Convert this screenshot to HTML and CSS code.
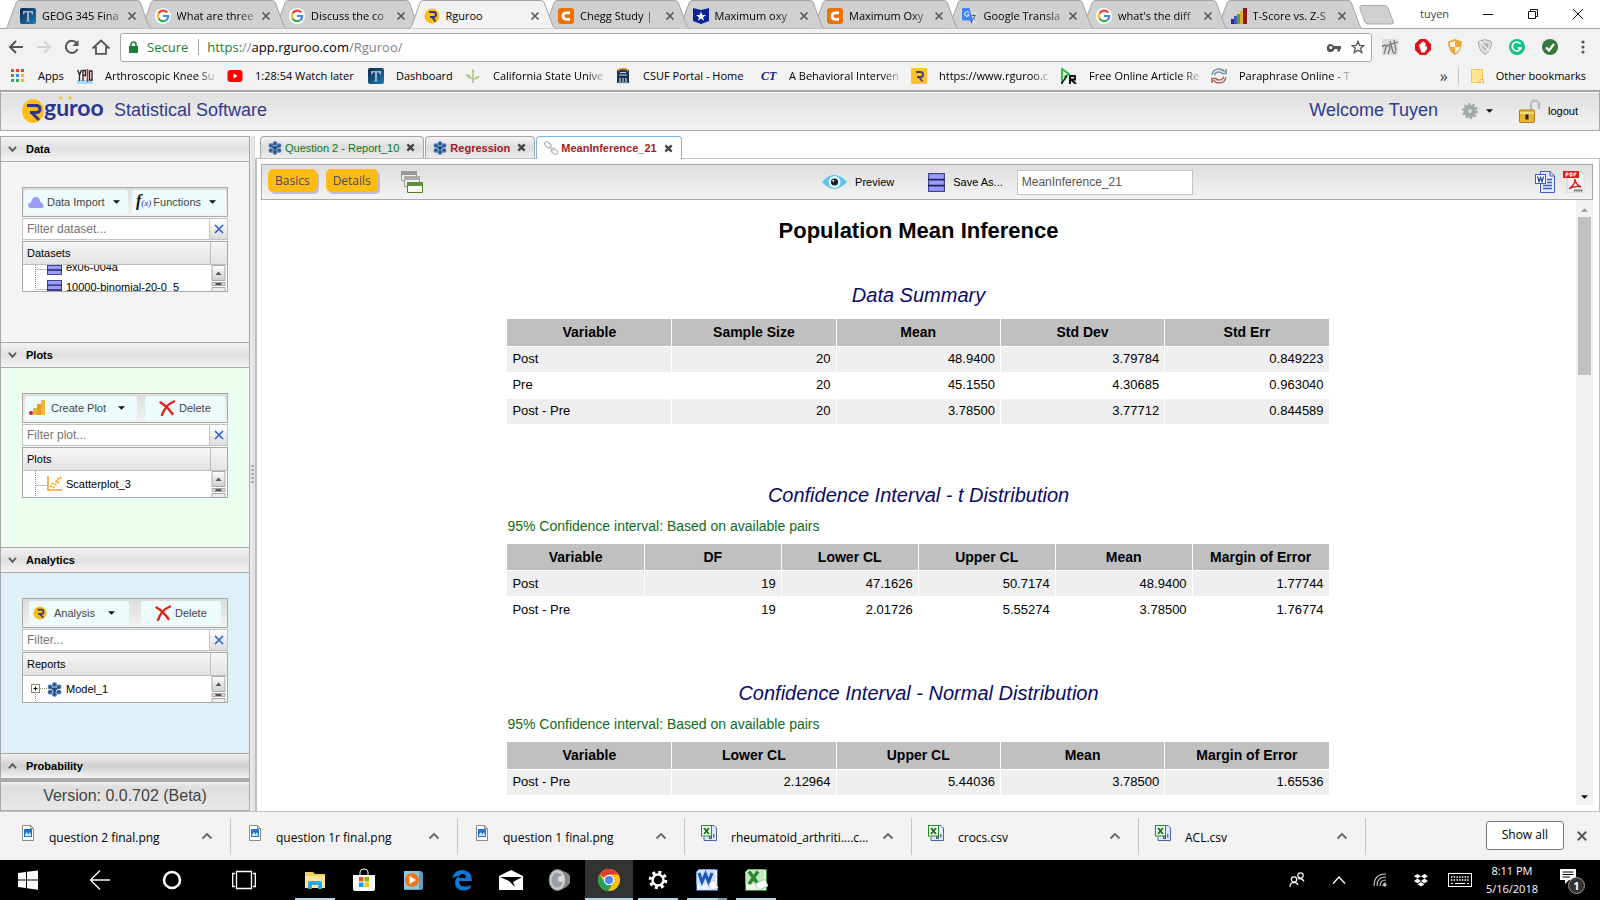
FILE: index.html
```html
<!DOCTYPE html>
<html lang="en">
<head>
<meta charset="utf-8">
<title>Rguroo</title>
<link rel="stylesheet" href="styles.css">
</head>
<body>
<svg class="defs" aria-hidden="true">
  <linearGradient id="gradT" x1="0" y1="0" x2="1" y2="1"><stop offset="0" stop-color="#0b2a4a"/><stop offset="1" stop-color="#1d7bb8"/></linearGradient>
  <linearGradient id="gradKey" x1="0" y1="0" x2="0" y2="1"><stop offset="0" stop-color="#fdfdfd"/><stop offset="1" stop-color="#cfcfcf"/></linearGradient>
  <symbol id="tabshape" viewBox="0 0 146 29" preserveAspectRatio="none"><path d="M0 28.500 C2 28 2 27 3 25 L11 3 Q12 .5 14 .5 H132 Q134 .5 135 3 L143 25 Q144 28 146 28.500" stroke="#a3a3a3" vector-effect="non-scaling-stroke"/></symbol>
  <symbol id="x" viewBox="0 0 10 10"><path d="M1.500 1.500 8.500 8.500M8.500 1.500 1.500 8.500" stroke="#555" stroke-width="1.600" fill="none"/></symbol>
  <symbol id="xb" viewBox="0 0 10 10"><path d="M1.500 1.500 8.500 8.500M8.500 1.500 1.500 8.500" stroke="#444" stroke-width="2.600" fill="none"/></symbol>
  <symbol id="up" viewBox="0 0 12 8"><path d="M1.500 6.500 6 2 10.500 6.500" stroke="#666" stroke-width="1.800" fill="none"/></symbol>
  <symbol id="caret" viewBox="0 0 8 4"><path d="M0 0H8L4 4Z" fill="#111"/></symbol>
  <symbol id="T" viewBox="0 0 16 16"><rect width="16" height="16" rx="2" fill="url(#gradT)"/><path d="M3 3H13V6.500H12L11 4.500H9V12.500L10.500 13.500H5.500L7 12.500V4.500H5L4 6.500H3Z" fill="#9fb3c4"/></symbol>
  <symbol id="google" viewBox="0 0 16 16"><circle cx="8" cy="8" r="8" fill="#fff"/><path d="M12.200 4.500A5.300 5.300 0 0 0 3.500 5.500" stroke="#ea4335" stroke-width="2.200" fill="none"/><path d="M3.500 5.500A5.300 5.300 0 0 0 3.500 10.500" stroke="#fbbc05" stroke-width="2.200" fill="none"/><path d="M3.500 10.500A5.300 5.300 0 0 0 11.500 12" stroke="#34a853" stroke-width="2.200" fill="none"/><path d="M8 8H13.200A5.300 5.300 0 0 1 11.500 12" stroke="#4285f4" stroke-width="2.200" fill="none"/></symbol>
  <symbol id="rg" viewBox="0 0 16 16"><circle cx="8" cy="8" r="7.500" fill="#fdbd17"/><path d="M5 4H9.500Q12 4 12 6.500T9.500 9H6" stroke="#333a80" stroke-width="2" fill="none"/><path d="M8 9 11.500 13.500" stroke="#333a80" stroke-width="2"/></symbol>
  <symbol id="rsq" viewBox="0 0 16 16"><rect width="16" height="16" rx="1" fill="#fdc22c"/><path d="M5 4H9.500Q12 4 12 6.500T9.500 9H6" stroke="#4a4470" stroke-width="2" fill="none"/><path d="M8 9 11.500 13.500" stroke="#4a4470" stroke-width="2"/></symbol>
  <symbol id="chegg" viewBox="0 0 16 16"><rect width="16" height="16" rx="3" fill="#eb7100"/><path d="M12 4.800H8.500Q5 4.800 5 8T8.500 11.300H12" stroke="#fff" stroke-width="2.800" fill="none"/></symbol>
  <symbol id="star" viewBox="0 0 16 16"><path d="M0 0 8 2 16 0V13L8 16 0 13Z" fill="#0a2496"/><path d="M8 3.500 9.300 7H13L10 9.200 11 12.700 8 10.500 5 12.700 6 9.200 3 7H6.700Z" fill="#fff"/></symbol>
  <symbol id="gtrans" viewBox="0 0 16 16"><path d="M7 4H15V14Q15 15.500 13.500 15.500H10Z" fill="#ddd"/><path d="M9 7.500H14M11.500 6V7.500M13 7.500Q12.500 10.500 10 12M10.500 9Q11.500 11 13.500 12" stroke="#56708c" stroke-width="1" fill="none"/><path d="M0 1Q0 0 1 0H7.500L11 12.500H1Q0 12.500 0 11.500Z" fill="#4285f4"/><path d="M7 4.800A2.300 2.300 0 1 0 7.200 6.800H5" stroke="#fff" fill="none"/><path d="M8 12.500H11L9.500 15.500Z" fill="#3456a8"/></symbol>
  <symbol id="bars" viewBox="0 0 16 16"><rect y="11" width="3" height="5" fill="#49218e"/><rect x="3" y="8" width="3" height="8" fill="#3b5bc0"/><rect x="6" y="6" width="3" height="10" fill="#55a03a"/><rect x="9" y="3" width="3" height="13" fill="#e0b020"/><rect x="12" y="0" width="4" height="16" fill="#8e1818"/></symbol>
  <symbol id="db" viewBox="0 0 14 14" preserveAspectRatio="none"><path d="M.5 .5H13.500V13.500H.5Z" fill="#9a9cff" stroke="#444a90"/><path d="M0 4.800H14M0 9.300H14" stroke="#22245a" stroke-width="1.300"/></symbol>
  <symbol id="flower" viewBox="0 0 16 16"><g fill="#3f72ad"><circle cx="8" cy="8" r="3"/><circle cx="8" cy="2.800" r="2.600"/><circle cx="8" cy="13.200" r="2.600"/><circle cx="3.300" cy="5.200" r="2.600"/><circle cx="12.700" cy="5.200" r="2.600"/><circle cx="3.300" cy="10.800" r="2.600"/><circle cx="12.700" cy="10.800" r="2.600"/></g><path d="M8 1V15M2 5 14 11M14 5 2 11" stroke="#173a68" stroke-width="1"/><g fill="#b9d2ee"><circle cx="8" cy="5.500" r=".8"/><circle cx="10.200" cy="9.300" r=".8"/><circle cx="5.800" cy="9.300" r=".8"/></g></symbol>
  <symbol id="del" viewBox="0 0 16 16"><path d="M1.500 2.500C6 5 10 9 13.500 14M15 1.500C9 4 5 9 3 15" stroke="#e0221a" stroke-width="2.400" fill="none" stroke-linecap="round"/></symbol>
  <symbol id="png" viewBox="0 0 12 16"><path d="M.5 .5H8.500L11.500 3.500V15.500H.5Z" fill="#fff" stroke="#8a8a8a"/><path d="M8.500 .5V3.500H11.500" fill="none" stroke="#8a8a8a"/><rect x="2" y="4" width="8" height="8" fill="#1876d1"/><path d="M3 9.500 5 7 6.500 9.500 8 7 9 9.500V11H3Z" fill="#cfe6fa"/></symbol>
  <symbol id="csv" viewBox="0 0 16 16"><path d="M5 .5H13L15.500 3V15.500H3V12" fill="#dfe8fa" stroke="#4a64a0"/><path d="M10.500 13.500V9.500H8.500M10.500 11.300H8.500V13.500H10.500M12.800 9V12.500" stroke="#2a3a66" fill="none"/><rect x=".5" y=".5" width="10" height="10.500" fill="#f2fbef" stroke="#2a8a2a"/><path d="M3 3 8 9M8 3 3 9" stroke="#197019" stroke-width="1.800"/></symbol>
  <symbol id="chev" viewBox="0 0 10 8"><path d="M1 1.500 5 6 9 1.500" stroke="#555" stroke-width="2" fill="none"/></symbol>
  <symbol id="sbtn" viewBox="0 0 14 26"><path d="M.5 .5H13.500V15.500H.5Z" fill="url(#gradKey)" stroke="#a8a8a8"/><path d="M4 10H10L7 6.500Z" fill="#555"/><path d="M.5 17.500H13.500V20.500H.5Z" fill="#ddd" stroke="#a8a8a8"/><path d="M4 19H10" stroke="#555" stroke-width="2"/><path d="M.5 22.500H13.500V30H.5Z" fill="#eee" stroke="#a8a8a8"/></symbol>
</svg>

<nav class="tabstrip" aria-label="Browser tabs">
  <div class="tabs">
    <a class="tab" href="#"><svg class="tabbg"><use href="#tabshape"/></svg><svg class="fav"><use href="#T"/></svg><span class="tl">GEOG 345 Fina</span><svg class="tx"><use href="#x"/></svg></a>
    <a class="tab" href="#"><svg class="tabbg"><use href="#tabshape"/></svg><svg class="fav"><use href="#google"/></svg><span class="tl">What are three</span><svg class="tx"><use href="#x"/></svg></a>
    <a class="tab" href="#"><svg class="tabbg"><use href="#tabshape"/></svg><svg class="fav"><use href="#google"/></svg><span class="tl">Discuss the co</span><svg class="tx"><use href="#x"/></svg></a>
    <a class="tab active" href="#"><svg class="tabbg"><use href="#tabshape"/></svg><svg class="fav"><use href="#rg"/></svg><span class="tl">Rguroo</span><svg class="tx"><use href="#x"/></svg></a>
    <a class="tab" href="#"><svg class="tabbg"><use href="#tabshape"/></svg><svg class="fav"><use href="#chegg"/></svg><span class="tl">Chegg Study |</span><svg class="tx"><use href="#x"/></svg></a>
    <a class="tab" href="#"><svg class="tabbg"><use href="#tabshape"/></svg><svg class="fav"><use href="#star"/></svg><span class="tl">Maximum oxy</span><svg class="tx"><use href="#x"/></svg></a>
    <a class="tab" href="#"><svg class="tabbg"><use href="#tabshape"/></svg><svg class="fav"><use href="#chegg"/></svg><span class="tl">Maximum Oxy</span><svg class="tx"><use href="#x"/></svg></a>
    <a class="tab" href="#"><svg class="tabbg"><use href="#tabshape"/></svg><svg class="fav"><use href="#gtrans"/></svg><span class="tl">Google Transla</span><svg class="tx"><use href="#x"/></svg></a>
    <a class="tab" href="#"><svg class="tabbg"><use href="#tabshape"/></svg><svg class="fav"><use href="#google"/></svg><span class="tl">what's the diff</span><svg class="tx"><use href="#x"/></svg></a>
    <a class="tab" href="#"><svg class="tabbg"><use href="#tabshape"/></svg><svg class="fav"><use href="#bars"/></svg><span class="tl">T-Score vs. Z-S</span><svg class="tx"><use href="#x"/></svg></a>
  </div>
  <button class="newtab" aria-label="New tab"><svg width="36" height="20" viewBox="0 0 36 20"><path d="M3 .5H26Q28 .5 29 3L34 16Q35 19 33 19H9Q7 19 6 17L1 4Q0 .5 3 .5Z" fill="#d0d0d0" stroke="#a8a8a8"/></svg></button>
  <div class="wincontrols">
    <span class="user">tuyen</span>
    <button aria-label="Minimize"><svg width="12" height="12" viewBox="0 0 12 12"><path d="M1 6.500H11" stroke="#111"/></svg></button>
    <button aria-label="Restore"><svg width="12" height="12" viewBox="0 0 12 12"><path d="M1.500 3.500H8.500V10.500H1.500ZM3.500 3.500V1.500H10.500V8.500H8.500" stroke="#111" fill="none"/></svg></button>
    <button aria-label="Close"><svg width="12" height="12" viewBox="0 0 12 12"><path d="M1 1 11 11M11 1 1 11" stroke="#111"/></svg></button>
  </div>
</nav>

<div class="addressrow">
  <button aria-label="Back"><svg width="16" height="16" viewBox="0 0 16 16"><path d="M15 8H2M8 2 2 8 8 14" stroke="#555" stroke-width="2" fill="none"/></svg></button>
  <button aria-label="Forward"><svg width="16" height="16" viewBox="0 0 16 16"><path d="M1 8H14M8 2 14 8 8 14" stroke="#d3d3d3" stroke-width="2" fill="none"/></svg></button>
  <button aria-label="Reload"><svg width="16" height="16" viewBox="0 0 16 16"><path d="M13.500 10A6 6 0 1 1 12.500 4" stroke="#555" stroke-width="2" fill="none"/><path d="M14.500 1V7H8.500Z" fill="#555"/></svg></button>
  <button aria-label="Home"><svg width="18" height="16" viewBox="0 0 18 16"><path d="M1.500 8.500 9 1.500 16.500 8.500H14V14.800H4V8.500Z" stroke="#555" stroke-width="1.800" fill="none"/></svg></button>
  <div class="omnibox">
    <svg width="9" height="12" viewBox="0 0 9 12"><rect y="5" width="9" height="7" fill="#178038"/><path d="M2 6V3.500A2.500 2.500 0 0 1 7 3.500V6" stroke="#178038" stroke-width="1.500" fill="none"/></svg>
    <span class="secure">Secure</span>
    <span class="url"><span class="scheme">https:</span><span class="dim">//</span>app.rguroo.com<span class="dim">/Rguroo/</span></span>
    <svg width="15" height="9" viewBox="0 0 15 9"><path d="M7 3H14V6H13V8.500H10.500V6H7.500A4 4 0 1 1 7 3Z" fill="#555"/><circle cx="3.800" cy="4.500" r="1.500" fill="#fff"/></svg>
    <svg width="14" height="14" viewBox="0 0 14 14"><path d="M7 1.300 8.600 5.300 13 5.500 9.600 8.300 10.800 12.500 7 10.200 3.200 12.500 4.400 8.300 1 5.500 5.400 5.300Z" stroke="#555" stroke-width="1.300" fill="none"/></svg>
  </div>
  <div class="extensions">
    <svg width="16" height="16" viewBox="0 0 16 16"><rect width="16" height="16" fill="#ddd"/><path d="M0 8Q3 4 4 8L2 15M4 8Q7 4 8 9L6 15M8 2 11 13Q12 15 14 13M12 1 14 12M6 6 16 3" stroke="#777" fill="none" stroke-width="1.300"/></svg>
    <svg width="16" height="16" viewBox="0 0 16 16"><path d="M5 0H11L16 5V11L11 16H5L0 11V5Z" fill="#d8141a"/><path d="M4.500 8V5H6V3.500H7.500V2.500H9V3.500H10.500V8L12 7V10L9.500 13.500H6.500Z" fill="#fff"/></svg>
    <svg width="14" height="16" viewBox="0 0 14 16"><path d="M7 0 14 2.500Q14 12 7 16 0 12 0 2.500Z" fill="#e9a93c"/><path d="M7 2V8H12Q11 12 7 14V8H2Q2 6 2 3.500Z" fill="#fbf4e3"/></svg>
    <svg width="14" height="16" viewBox="0 0 14 16"><path d="M7 .5 13.500 2.500Q13.500 12 7 15.500 .5 12 .5 2.500Z" fill="#ddd" stroke="#aaa"/><path d="M4 4.500H10.500Q10.500 9 7 11.500 4 9.500 4 4.500Z" fill="#b0b0b0"/><path d="M2 2.500 12 12.500" stroke="#eee" stroke-width="1.600"/></svg>
    <svg width="16" height="16" viewBox="0 0 16 16"><circle cx="8" cy="8" r="8" fill="#15c286"/><path d="M11.500 5A4.500 4.500 0 1 0 12 9H8.500" stroke="#fff" stroke-width="1.700" fill="none"/></svg>
    <svg width="16" height="16" viewBox="0 0 16 16"><circle cx="8" cy="8" r="8" fill="#34793a"/><path d="M4 8.500 7 11.500 12 5" stroke="#fff" stroke-width="2.200" fill="none"/></svg>
    <svg width="16" height="16" viewBox="0 0 16 16" fill="#555"><circle cx="8" cy="3" r="1.600"/><circle cx="8" cy="8" r="1.600"/><circle cx="8" cy="13" r="1.600"/></svg>
  </div>
</div>

<nav class="bookmarks" aria-label="Bookmarks">
  <a href="#" class="bm b67"><svg viewBox="0 0 16 16"><g><path d="M1 1H4V4H1ZM6 1H9V4H6ZM11 1H14V4H11Z" fill="#ea4335"/><path d="M1 6H4V9H1Z" fill="#34a853"/><path d="M6 6H9V9H6Z" fill="#4285f4"/><path d="M11 6H14V9H11Z" fill="#fbbc05"/><path d="M1 11H4V14H1ZM6 11H9V14H6Z" fill="#34a853"/><path d="M11 11H14V14H11Z" fill="#fbbc05"/></g></svg><span>Apps</span></a>
  <a href="#" class="bm b150"><svg viewBox="0 0 16 16"><rect y="12" width="16" height="4" fill="#a8d8f5"/><path d="M.8 2 2.500 7V13M4.500 2 2.500 7M6 13V2.500H8.500V7.500H6M12.500 3H15V12H12.500Z" stroke="#222" stroke-width="1.300" fill="none"/><path d="M10.500 1V14" stroke="#e01818" stroke-width="1.500"/></svg><span>Arthroscopic Knee Su</span></a>
  <a href="#" class="bm b141"><svg viewBox="0 0 16 16"><rect x=".5" y="2" width="15" height="12" rx="3" fill="#f00"/><path d="M6.500 5.500V10.500L10.500 8Z" fill="#fff"/></svg><span>1:28:54 Watch later</span></a>
  <a href="#" class="bm b97"><svg viewBox="0 0 16 16"><use href="#T"/></svg><span>Dashboard</span></a>
  <a href="#" class="bm b150"><svg viewBox="0 0 16 16"><path d="M8 15Q8 9 8 6" stroke="#7a9a50" fill="none"/><path d="M8 1Q10.500 3.500 8 6 5.500 3.500 8 1ZM7 11Q2 11.500 1 6 6 6 7 11ZM9 11.500Q10 7.500 15 8 13 12 9 11.500Z" fill="#a9cf7a"/></svg><span>California State Unive</span></a>
  <a href="#" class="bm b146"><svg viewBox="0 0 16 16"><path d="M2 2Q8-1 14 2V15H2Z" fill="#1f3358"/><path d="M3 3 5 1H11L13 3" stroke="#e88a2a" stroke-width="1.500" fill="none"/><path d="M5 14V10M8 14V10M11 14V10M4 7H12M5 4.500H11M3 15H13" stroke="#c5cfe0" stroke-width="1.200"/></svg><span>CSUF Portal - Home</span></a>
  <a href="#" class="bm b150"><b class="ct">CT</b><span>A Behavioral Interven</span></a>
  <a href="#" class="bm b150"><svg viewBox="0 0 16 16"><use href="#rsq"/></svg><span>https://www.rguroo.c</span></a>
  <a href="#" class="bm b150"><svg viewBox="0 0 16 16"><path d="M1 16V1L8 6 3 9" stroke="#25c43a" stroke-width="2" fill="none"/><path d="M0 16 6 8" stroke="#111" stroke-width="1.500"/><path d="M9 16V8H14V11.500H10L15 16" stroke="#111" stroke-width="2" fill="none"/></svg><span>Free Online Article Re</span></a>
  <a href="#" class="bm b150"><svg viewBox="0 0 16 16" fill="none" stroke-width="1.500"><path d="M1 7Q2 1 8 1 12 1 13.500 4M15 1V5.500H10.500M3.500 7.500Q4 4 8 4 10 4 11 5.500" stroke="#6f8fa8"/><path d="M15 9Q14 15 8 15 4 15 2.500 12M1 15V10.500H5.500M12.500 8.500Q12 12 8 12 6 12 5 10.500" stroke="#b0605a"/></svg><span>Paraphrase Online - T</span></a>
  <span class="more">»</span>
  <a href="#" class="bm other"><svg viewBox="0 0 16 16"><path d="M2.500 1.500H13.500V14.500H2.500Z" fill="#ffe694" stroke="#eccb50"/><path d="M11 14.500V11.500H14.500V14.500Z" fill="#fff0b8" stroke="#e3bf45"/></svg><span>Other bookmarks</span></a>
</nav>

<header class="apphead">
  <a href="#" class="logo" aria-label="Rguroo">
    <svg width="22" height="24" viewBox="0 0 22 24"><ellipse cx="11" cy="12" rx="10.800" ry="12" fill="#fdbd17"/><path d="M5 6.500H14Q18 6.500 18 10T14 13.500H8" stroke="#2c3590" stroke-width="3" fill="none"/><path d="M10 14 17 21" stroke="#2c3590" stroke-width="3"/></svg>
    <span class="wordmark">guroo<svg class="dots" width="14" height="4" viewBox="0 0 14 4"><circle cx="2" cy="2" r="1.600" fill="#fdbd17"/><circle cx="11" cy="2" r="1.600" fill="#fdbd17"/></svg></span>
  </a>
  <span class="apptitle">Statistical Software</span>
  <span class="welcome">Welcome Tuyen</span>
  <button class="gear" aria-label="Settings"><svg width="16" height="16" viewBox="0 0 16 16"><circle cx="8" cy="8" r="6.800" fill="none" stroke="#9fa9a9" stroke-width="2.200" stroke-dasharray="2.500 1.770"/><circle cx="8" cy="8" r="4" fill="none" stroke="#9fa9a9" stroke-width="4.600"/><circle cx="8" cy="8" r="1.700" fill="#d5dada"/></svg><svg width="7" height="4"><use href="#caret"/></svg></button>
  <button class="logout"><svg width="22" height="24" viewBox="0 0 22 24"><path d="M12 11V5.500A4 4 0 0 1 20 5.500V10" stroke="#bdbdbd" stroke-width="2.400" fill="none"/><rect x=".5" y="11" width="15" height="12.500" rx="1" fill="#e9b52e" stroke="#a87a18"/><path d="M1 14H15" stroke="#f8dc7c" stroke-width="2"/><path d="M6.500 15.500H9.500V20.500H6.500Z" fill="#222"/></svg>logout</button>
</header>

<main class="workspace">
  <aside class="sidebar">
    <section class="sec">
      <h2 class="sechead"><svg><use href="#chev"/></svg>Data</h2>
      <div class="secbody gray">
        <div class="bar tight"><button class="b-import"><svg width="16" height="11" viewBox="0 0 16 11"><path d="M2 11Q0 10 0 8 0 6 3 5.500 4 0 8 0 11 0 12 4 13 6 15 7 17 11 14 11Z" fill="#9a9cf8"/></svg>Data Import<svg class="car"><use href="#caret"/></svg></button><button class="b-func"><span class="fx">f<small>(x)</small></span>Functions<svg class="car"><use href="#caret"/></svg></button></div>
        <div class="filter"><input type="text" placeholder="Filter dataset..." aria-label="Filter dataset"><button aria-label="Clear"><svg width="10" height="10" viewBox="0 0 10 10"><path d="M1 1 9 9M9 1 1 9" stroke="#2d63d8" stroke-width="1.700"/></svg></button></div>
        <div class="grid"><div class="gridhead"><span>Datasets</span></div>
          <div class="gridbody"><ul class="tree scrolled">
            <li><svg class="conn" viewBox="0 0 24 20"><path d="M12.500 0V20M12.500 12.500H24" /></svg><svg class="ti"><use href="#db"/></svg>ex06-004a</li>
            <li><svg class="conn" viewBox="0 0 24 20"><path d="M12.500 0V12M12.500 12.500H24" /></svg><svg class="ti"><use href="#db"/></svg>10000-binomial-20-0_5</li></ul>
            <svg class="sb"><use href="#sbtn"/></svg></div></div>
      </div>
    </section>
    <section class="sec">
      <h2 class="sechead"><svg><use href="#chev"/></svg>Plots</h2>
      <div class="secbody green">
        <div class="bar mid"><button class="b-plot"><svg width="16" height="15" viewBox="0 0 16 15"><rect x="4" y="8" width="4" height="7" fill="#f0b429"/><rect x="8" y="4" width="4" height="11" fill="#e89d1e"/><rect x="12" width="4" height="15" fill="#f3b63a"/><circle cx="2" cy="13" r="2" fill="#c0203a"/></svg>Create Plot<svg class="car"><use href="#caret"/></svg></button><button class="b-del"><svg width="16" height="16"><use href="#del"/></svg>Delete</button></div>
        <div class="filter"><input type="text" placeholder="Filter plot..." aria-label="Filter plot"><button aria-label="Clear"><svg width="10" height="10" viewBox="0 0 10 10"><path d="M1 1 9 9M9 1 1 9" stroke="#2d63d8" stroke-width="1.700"/></svg></button></div>
        <div class="grid"><div class="gridhead"><span>Plots</span></div>
          <div class="gridbody"><ul class="tree">
            <li class="tall"><svg class="conn" viewBox="0 0 24 26"><path d="M12.500 0V26M12.500 14.500H24"/></svg><svg class="ti" viewBox="0 0 16 16"><path d="M1 0V15H16" stroke="#f5a01a" stroke-width="1.600" fill="none"/><g fill="#f5a01a"><circle cx="4" cy="11" r="1.200"/><circle cx="7" cy="12" r="1.200"/><circle cx="6" cy="8" r="1.200"/><circle cx="9" cy="9" r="1.200"/><circle cx="10" cy="5.500" r="1.200"/><circle cx="12" cy="7" r="1.200"/><circle cx="14.500" cy="2" r="1.200"/><circle cx="12" cy="3" r="1.200"/></g></svg>Scatterplot_3</li></ul>
            <svg class="sb"><use href="#sbtn"/></svg></div></div>
      </div>
    </section>
    <section class="sec">
      <h2 class="sechead"><svg><use href="#chev"/></svg>Analytics</h2>
      <div class="secbody blue">
        <div class="bar wide"><button class="b-ana"><svg width="14" height="14"><use href="#rg"/></svg>Analysis<svg class="car"><use href="#caret"/></svg></button><button class="b-del"><svg width="16" height="16"><use href="#del"/></svg>Delete</button></div>
        <div class="filter"><input type="text" placeholder="Filter..." aria-label="Filter"><button aria-label="Clear"><svg width="10" height="10" viewBox="0 0 10 10"><path d="M1 1 9 9M9 1 1 9" stroke="#2d63d8" stroke-width="1.700"/></svg></button></div>
        <div class="grid"><div class="gridhead"><span>Reports</span></div>
          <div class="gridbody"><ul class="tree">
            <li class="tall"><svg class="conn" viewBox="0 0 24 26"><path d="M12.500 18V26M17 12.500H24"/><rect x="8.500" y="8.500" width="8" height="8" class="plusbox"/><path d="M10.500 12.500H14.500M12.500 10.500V14.500" class="plus"/></svg><svg class="ti"><use href="#flower"/></svg>Model_1</li></ul>
            <svg class="sb"><use href="#sbtn"/></svg></div></div>
      </div>
    </section>
    <h2 class="sechead prob"><svg class="flip"><use href="#chev"/></svg>Probability</h2>
    <div class="version">Version: 0.0.702 (Beta)</div>
  </aside>
  <div class="splitter"><svg width="5" height="18" viewBox="0 0 5 18"><path d="M1 1H4M1 5H4M1 9H4M1 13H4M1 17H4" stroke="#999" stroke-width="1.500"/></svg></div>

  <div class="content">
    <nav class="apptabs" aria-label="Reports">
      <a href="#" class="apptab ok"><svg><use href="#flower"/></svg>Question 2 - Report_10<svg class="ax"><use href="#xb"/></svg></a>
      <a href="#" class="apptab"><svg><use href="#flower"/></svg>Regression<svg class="ax"><use href="#xb"/></svg></a>
      <a href="#" class="apptab current"><svg viewBox="0 0 16 16" fill="none" stroke="#bbb" stroke-width="1.600"><rect x="-3.500" y="-2.500" width="8" height="5" rx="2.500" transform="translate(4 4) rotate(42)"/><path d="M6 6 11 11"/><rect x="-4" y="-2.500" width="8" height="5" rx="2.500" transform="translate(12 12) rotate(42)"/></svg>MeanInference_21<svg class="ax"><use href="#xb"/></svg></a>
    </nav>
    <div class="pane">
      <div class="toolbar">
        <button class="pill">Basics</button>
        <button class="pill">Details</button>
        <button class="plain stack" aria-label="Windows"><svg width="22" height="22" viewBox="0 0 22 22"><path d="M.5 .5H15.500V9.500H.5Z" fill="#eee" stroke="#999"/><path d="M0 0H16V4H0Z" fill="#999"/><path d="M3.500 5.500H18.500V15.500H3.500Z" fill="#eee" stroke="#999"/><path d="M3 5H19V9H3Z" fill="#aaa"/><path d="M6.500 11.500H21.500V21.500H6.500Z" fill="#f4faee" stroke="#4f8030"/><path d="M6 11H22V15H6Z" fill="#5d8f3c"/></svg></button>
        <span class="sp7"></span>
        <button class="plain"><svg width="25" height="16" viewBox="0 0 25 16"><path d="M0 8Q12-6 25 8 12 22 0 8Z" fill="#5cc3ea"/><circle cx="12.500" cy="8" r="6" fill="#e3f6fd"/><circle cx="12.500" cy="8" r="3.600" fill="#16242c"/><circle cx="11.300" cy="6.800" r="1" fill="#fff"/></svg>Preview</button>
        <button class="plain save"><svg width="17" height="19"><use href="#db"/></svg>Save As...</button>
        <input class="name" type="text" value="MeanInference_21" aria-label="Report name">
        <span class="sp6"></span>
        <button class="plain" aria-label="Export to Word"><svg width="20" height="22" viewBox="0 0 20 22"><path d="M5.500 .5H15L19.500 5V21.500H5.500Z" fill="#e4ebfb" stroke="#3f5fc0"/><path d="M15 .5V5H19.500" fill="none" stroke="#3f5fc0"/><path d="M12 8.500H17M12 11.500H17M8 14.500H17M8 17.500H17" stroke="#3f5fc0" stroke-width="1.500"/><rect x=".5" y="3.500" width="10" height="9" fill="#fff" stroke="#3f5fc0"/><path d="M2.500 5.500 4 10.500 5.500 6.500 7 10.500 8.500 5.500" stroke="#2947a8" stroke-width="1.300" fill="none"/></svg></button>
        <button class="plain pdf" aria-label="Export to PDF"><svg width="22" height="22" viewBox="0 0 22 22"><path d="M4 0H17L22 5V22H4Z" fill="#f3f3f3" stroke="#ccc"/><rect width="16" height="7" fill="#d8201c"/><path d="M3 5.500V2H5V3.800H3M7 2V5H9V2ZM11 5.500V2H13.500M11 3.700H13" stroke="#fff" fill="none"/><path d="M12 8Q12 13 18 16 12 14 6 18 12 14 12 8" stroke="#d8201c" stroke-width="1.400" fill="none"/><path d="M11 19.500H20" stroke="#555" stroke-width="2" stroke-dasharray="1.500 .7"/></svg></button>
      </div>
      <div class="reportwrap">
        <article class="report">
          <h1>Population Mean Inference</h1>
          <section class="block">
            <h3>Data Summary</h3>
            <table>
              <thead><tr><th>Variable</th><th>Sample Size</th><th>Mean</th><th>Std Dev</th><th>Std Err</th></tr></thead>
              <tbody>
                <tr><td>Post</td><td>20</td><td>48.9400</td><td>3.79784</td><td>0.849223</td></tr>
                <tr><td>Pre</td><td>20</td><td>45.1550</td><td>4.30685</td><td>0.963040</td></tr>
                <tr><td>Post - Pre</td><td>20</td><td>3.78500</td><td>3.77712</td><td>0.844589</td></tr>
              </tbody>
            </table>
          </section>
          <section class="block">
            <h3>Confidence Interval - t Distribution</h3>
            <p>95% Confidence interval: Based on available pairs</p>
            <table>
              <thead><tr><th>Variable</th><th>DF</th><th>Lower CL</th><th>Upper CL</th><th>Mean</th><th>Margin of Error</th></tr></thead>
              <tbody>
                <tr><td>Post</td><td>19</td><td>47.1626</td><td>50.7174</td><td>48.9400</td><td>1.77744</td></tr>
                <tr><td>Post - Pre</td><td>19</td><td>2.01726</td><td>5.55274</td><td>3.78500</td><td>1.76774</td></tr>
              </tbody>
            </table>
          </section>
          <section class="block">
            <h3>Confidence Interval - Normal Distribution</h3>
            <p>95% Confidence interval: Based on available pairs</p>
            <table>
              <thead><tr><th>Variable</th><th>Lower CL</th><th>Upper CL</th><th>Mean</th><th>Margin of Error</th></tr></thead>
              <tbody><tr><td>Post - Pre</td><td>2.12964</td><td>5.44036</td><td>3.78500</td><td>1.65536</td></tr></tbody>
            </table>
          </section>
        </article>
        <div class="scroll"><svg width="7" height="4" viewBox="0 0 8 4"><path d="M0 4H8L4 0Z" fill="#999"/></svg><div class="thumb"></div><svg width="7" height="4"><use href="#caret"/></svg></div>
      </div>
    </div>
  </div>
</main>

<footer class="downloads">
  <div class="dl"><svg class="di png"><use href="#png"/></svg><span>question 2 final.png</span><svg class="du"><use href="#up"/></svg></div>
  <div class="dl"><svg class="di png"><use href="#png"/></svg><span>question 1r final.png</span><svg class="du"><use href="#up"/></svg></div>
  <div class="dl"><svg class="di png"><use href="#png"/></svg><span>question 1 final.png</span><svg class="du"><use href="#up"/></svg></div>
  <div class="dl"><svg class="di"><use href="#csv"/></svg><span>rheumatoid_arthriti....c...</span><svg class="du"><use href="#up"/></svg></div>
  <div class="dl"><svg class="di"><use href="#csv"/></svg><span>crocs.csv</span><svg class="du"><use href="#up"/></svg></div>
  <div class="dl"><svg class="di"><use href="#csv"/></svg><span>ACL.csv</span><svg class="du"><use href="#up"/></svg></div>
  <button class="showall">Show all</button>
  <button class="dclose" aria-label="Close downloads"><svg width="12" height="12"><use href="#x"/></svg></button>
</footer>

<nav class="taskbar" aria-label="Taskbar">
  <div class="sys">
    <button aria-label="Start"><svg viewBox="0 0 24 24" fill="#fff"><path d="M2 5 10 4V11.500H2ZM11 3.800 22 2.500V11.500H11ZM2 12.500H10V20L2 19ZM11 12.500H22V21.800L11 20.300Z"/></svg></button>
    <button aria-label="Back"><svg viewBox="0 0 24 24"><path d="M22 12H3M12 2.500 2.500 12 12 21.500" stroke="#fff" stroke-width="1.300" fill="none"/></svg></button>
    <button aria-label="Cortana"><svg viewBox="0 0 24 24"><circle cx="12" cy="12" r="8" stroke="#fff" stroke-width="2.500" fill="none"/></svg></button>
    <button aria-label="Task view"><svg viewBox="0 0 24 24"><path d="M4.500 3.500H19.500V20.500H4.500ZM3 5.500H.7V18.500H3M21 5.500H23.300V18.500H21" stroke="#fff" stroke-width="1.300" fill="none"/></svg></button>
  </div>
  <div class="apps">
    <button class="run" aria-label="File Explorer"><svg viewBox="0 0 24 24"><path d="M2 4H10L12 6H22V20H2Z" fill="#f5cf5c"/><path d="M2 8H22V20H2Z" fill="#fde69a"/><path d="M5 21V15Q5 13 7 13H17Q19 13 19 15V21H15V17H9V21Z" fill="#2fa8e0"/></svg></button>
    <button aria-label="Store"><svg viewBox="0 0 24 24"><path d="M8 7V4Q8 1 12 1T16 4V7" stroke="#fff" fill="none"/><path d="M1 7H23V21Q23 23 21 23H3Q1 23 1 21Z" fill="#fff"/><path d="M7 9H11.500V13.500H7Z" fill="#f25022"/><path d="M12.500 9H17V13.500H12.500Z" fill="#7fba00"/><path d="M7 14.500H11.500V19H7Z" fill="#00a4ef"/><path d="M12.500 14.500H17V19H12.500Z" fill="#ffb900"/></svg></button>
    <button aria-label="Media Player"><svg viewBox="0 0 24 24"><path d="M3 3H20L22 5V21L20 22H3Z" fill="#5c9fc4"/><path d="M3 3H18V21H3Z" fill="#93c6e0"/><circle cx="11" cy="12" r="7" fill="#f0761a"/><path d="M8.500 8 15 12 8.500 16Z" fill="#fff"/></svg></button>
    <button aria-label="Edge"><svg viewBox="0 0 24 24"><path d="M2 11Q4 2 12.500 2 22 2.500 22 13H9Q9 18 14 18.500 18 18.500 20.500 17V20.500Q17 22.500 13 22.500 5 22 5 14.500 5.500 9.500 10 7.500 4.500 8 2 11ZM9 10H16Q16 6 12.500 6T9 10Z" fill="#0d78d7"/></svg></button>
    <button aria-label="Mail"><svg viewBox="0 0 24 24"><path d="M0 8 12 2 24 8V22H0Z" fill="#fff"/><path d="M1 9 23 9 14 14 16 19 10 13Z" fill="#000"/></svg></button>
    <button aria-label="Sound"><svg viewBox="0 0 24 24"><path d="M9 2Q20 3 22 8V15Q19 20 12 22Z" fill="#888"/><ellipse cx="9.500" cy="12" rx="8.500" ry="10.500" fill="#c8ccd0" stroke="#777"/><ellipse cx="9" cy="12" rx="5.500" ry="7.500" fill="#9aa0a6"/><circle cx="13" cy="11" r="3" fill="#d8dce0"/></svg></button>
    <button class="run front" aria-label="Chrome"><svg viewBox="0 0 24 24"><circle cx="12" cy="12" r="11" fill="#fbc116"/><path d="M12 12 2.500 6.500A11 11 0 0 1 21.500 6.500H12Z" fill="#e0402f"/><path d="M2.500 6.500A11 11 0 0 0 11 23L16.500 14.500 12 12 7 13.500Z" fill="#1fa254"/><circle cx="12" cy="12" r="5.200" fill="#fff"/><circle cx="12" cy="12" r="4.100" fill="#4a8af4"/></svg></button>
    <button class="run" aria-label="Settings"><svg viewBox="0 0 24 24" fill="none" stroke="#fff"><circle cx="12" cy="12" r="5.500" stroke-width="2.500"/><circle cx="12" cy="12" r="7.800" stroke-width="3" stroke-dasharray="3.100 3.030"/></svg></button>
    <button class="run two" aria-label="Word"><svg viewBox="0 0 24 24"><path d="M4 1.500H22.500V22.500H1.500V4Z" fill="#eaf1fb" stroke="#2a5db0"/><path d="M4 1.500H20V16H1.500V4Z" fill="#cfe0f6"/><path d="M4 5 7 14 10.500 6 13.500 14 17 5" stroke="#1b58b8" stroke-width="3" fill="none"/><path d="M14 16 19 12 23 20 16 22Z" fill="#fff" stroke="#b9cdea"/></svg></button>
    <button class="run" aria-label="Excel"><svg viewBox="0 0 24 24"><path d="M4 1.500H22.500V22.500H1.500V4Z" fill="#eaf6e8" stroke="#2f8a3a"/><path d="M4 1.500H20V16H1.500V4Z" fill="#c8e6c0"/><path d="M5 3.500 14 16M14 3.500 5 16" stroke="#2a8a34" stroke-width="3.500"/><path d="M11 16 21 11 24 18 15 22Z" fill="#fff" stroke="#a5d0a5"/></svg></button>
  </div>
  <div class="tray">
    <div class="trayicons">
    <svg width="16" height="16" viewBox="0 0 16 16" fill="none" stroke="#fff" stroke-width="1.200"><circle cx="11.500" cy="3.500" r="2.700"/><circle cx="5" cy="7.500" r="2.700"/><path d="M1 15Q1 10.500 5 10.300 8.500 10.500 9 13M9 7Q13 5.500 15 9.500"/></svg>
    <svg width="14" height="10" viewBox="0 0 14 10"><path d="M1 8.500 7 2 13 8.500" stroke="#fff" stroke-width="1.300" fill="none"/></svg>
    <svg width="14" height="14" viewBox="0 0 14 14" fill="none" stroke="#ccc" stroke-width="1.100"><path d="M1 13Q1 1 13 1M4 13Q4 4 13 4M7 13Q7 7 13 7M10 13Q10 10 13 10"/><circle cx="12" cy="12" r="1" fill="#fff"/></svg>
    <svg width="14" height="13" viewBox="0 0 14 13" fill="#fff"><path d="M3.500 0 7 2.300 3.500 4.600 0 2.300ZM10.500 0 14 2.300 10.500 4.600 7 2.300ZM3.500 4.600 7 6.900 3.500 9.200 0 6.900ZM10.500 4.600 14 6.900 10.500 9.200 7 6.900ZM7 8 10.500 10.300 7 12.600 3.500 10.300Z"/></svg>
    </div>
    <svg width="24" height="14" viewBox="0 0 24 14" fill="none" stroke="#fff"><rect x=".5" y=".5" width="23" height="13"/><path d="M3 4H21M3 7H21" stroke-dasharray="1.500 1.200" stroke-width="1.300"/><path d="M3 10.500H5M7 10.500H17M19 10.500H21"/></svg>
    <div class="clock">8:11 PM<br>5/16/2018</div>
    <div class="note"><svg width="16" height="15" viewBox="0 0 16 15"><path d="M0 0H16V11H9L5 15V11H0Z" fill="#fff"/><path d="M2.500 3H13.500M2.500 5.500H13.500M2.500 8H10" stroke="#000"/></svg><b>1</b></div>
  </div>
</nav>
</body>
</html>
```
FILE: styles.css
```css
* { box-sizing: border-box; }
body {
  margin: 0; height: 100vh; display: flex; flex-direction: column; overflow: hidden;
  background: #fff; color: #000; font: 11px/16px "Open Sans", "Noto Sans", sans-serif;
}
a { color: inherit; text-decoration: none; }
button { font: inherit; color: inherit; background: none; border: 0; padding: 0; display: flex; align-items: center; }
svg { display: block; flex: none; }
.defs { position: absolute; width: 0; height: 0; }

/* browser tab strip */
.tabstrip { display: flex; height: 29px; flex: none; padding-left: 5px; box-shadow: inset 0 -1px #a3a3a3; }
.tabs { display: flex; flex: 1; min-width: 0; }
.tab { position: relative; flex: 1 1 0; min-width: 0; display: flex; align-items: center; height: 29px; margin-right: -12px; padding: 2px 15px 0 15px; fill: #d0d0d0; }
.tab:last-child { margin-right: 0; }
.tab:nth-child(1) { z-index: 10; } .tab:nth-child(2) { z-index: 9; } .tab:nth-child(3) { z-index: 8; }
.tab:nth-child(5) { z-index: 6; } .tab:nth-child(6) { z-index: 5; } .tab:nth-child(7) { z-index: 4; }
.tab:nth-child(8) { z-index: 3; } .tab:nth-child(9) { z-index: 2; } .tab:nth-child(10) { z-index: 1; }
.tab.active { z-index: 20; fill: #f2f2f2; }
.tabbg { position: absolute; inset: 0; width: 100%; height: 29px; z-index: -1; }
.fav { width: 16px; height: 16px; }
.tl { flex: 1; min-width: 0; margin: 0 3px 0 6px; white-space: nowrap; mask-image: linear-gradient(90deg, #000 75%, rgba(0, 0, 0, .2)); }
.tab.active .tl { mask-image: none; }
.tx { width: 10px; height: 10px; }
.newtab { width: 36px; margin-left: -3px; }
.wincontrols { display: flex; align-items: center; width: 205px; padding-left: 25px; padding-bottom: 2px; }
.user { width: 46px; color: #444; }
.wincontrols button { width: 45px; height: 26px; justify-content: center; }

/* address row */
.addressrow { display: flex; align-items: center; height: 33px; flex: none; padding: 3px 9px 0 8px; background: #f2f2f2; }
.addressrow > button { width: 28px; height: 24px; }
.omnibox { flex: 1; display: flex; align-items: center; height: 29px; padding: 0 6px 0 8px; background: #fff; border: 1px solid #a9a9a9; border-radius: 3px; font-size: 13px; gap: 9px; }
.secure { color: #178038; padding-right: 10px; border-right: 1px solid #aaa; }
.url { flex: 1; margin-left: -1px; }
.scheme { color: #178038; }
.dim { color: #80868b; }
.extensions { display: flex; align-items: center; justify-content: space-between; width: 219px; padding-left: 10px; }

/* bookmarks */
.bookmarks { display: flex; align-items: center; height: 29px; flex: none; padding: 0 14px 0 10px; background: #f2f2f2; border-bottom: 1px solid #a3a3a3; }
.bm { display: flex; align-items: center; flex: none; }
.bm svg { width: 16px; height: 16px; margin-right: 12px; }
.bm span { white-space: nowrap; }
.ct { width: 16px; margin-right: 12px; font: italic bold 12px "Liberation Serif", serif; color: #1b2380; }
.b67 { width: 67px; } .b97 { width: 97px; } .b141 { width: 141px; } .b146 { width: 146px; }
.b150 { width: 150px; }
.b150 span { mask-image: linear-gradient(90deg, #000 85%, rgba(0, 0, 0, .2)); }
.more { margin-left: auto; padding-right: 10px; font-size: 16px; color: #444; border-right: 1px solid #c4c4c4; }
.other { padding-left: 10px; }
.other svg { margin-right: 11px; }

/* application header */
.apphead { display: flex; align-items: center; height: 40px; flex: none; padding: 0 21px 2px; border: 1px solid #a8a8a8; box-shadow: inset 0 1px #fff; background: linear-gradient(#dedede, #f3f3f3); font-family: "Liberation Sans", Arial, sans-serif; }
.logo { display: flex; align-items: center; width: 92px; padding-top: 2px; }
.wordmark { position: relative; font: bold 23px/24px Lato, sans-serif; color: #2c3590; padding-bottom: 8px; }
.dots { position: absolute; left: 15px; top: 1px; }
.apptitle, .welcome { font-size: 18px; color: #2f3a8c; }
.welcome { margin-left: auto; }
.gear { gap: 8px; margin: 2px 26px 0 24px; }
.logout { gap: 7px; padding-top: 2px; font-size: 11px; }

/* workspace */
.workspace { flex: 1; min-height: 0; display: flex; padding-top: 5px; border-bottom: 1px solid #c4c4c4; font: 11px/14px "Liberation Sans", Arial, sans-serif; }
.sidebar { width: 250px; flex: none; display: flex; flex-direction: column; border: solid #a8a8a8; border-width: 0 1px 1px; }
.sec { flex: 1; min-height: 0; display: flex; flex-direction: column; }
.sechead { margin: 0; height: 26px; flex: none; display: flex; align-items: center; gap: 9px; padding-left: 7px; font-size: 11px; border: solid #a8a8a8; border-width: 1px 0; background: linear-gradient(#f2f2f2, #e0e0e0 50%, #f4f4f4); }
.prob { background: linear-gradient(#f2f2f2, #cfcfcf 50%, #f4f4f4); }
.sechead svg { width: 9px; height: 8px; }
.flip { transform: rotate(180deg); }
.secbody { flex: 1; min-height: 0; padding: 25px 21px 0; }
.gray { background: #f4f4f4; } .green { background: #edfff0; } .blue { background: #e0f0f8; }
.bar { display: flex; justify-content: space-between; align-items: center; height: 30px; border: 1px solid #a8a8a8; background: linear-gradient(#dcdcdc, #f2f2f2); }
.tight { padding: 0 1px; } .mid { padding: 0 2px; } .wide { padding: 0 6px; }
.bar button { height: 24px; border-radius: 3px; background: #edfbfc; color: #444; padding-left: 4px; }
.b-import { width: 104px; gap: 3px; } .b-func { width: 94px; gap: 2px; } .b-plot { width: 112px; gap: 6px; } .b-ana { width: 100px; gap: 7px; }
.bar .b-del { width: 80px; gap: 4px; padding-left: 14px; }
.car { width: 7px; height: 4px; margin-left: 6px; }
.fx { font: italic bold 16px/16px "Liberation Serif", serif; color: #111; }
.fx small { font-size: 9px; font-weight: normal; color: #1c1cd0; }
.filter { display: flex; height: 22px; margin: 1px 0; border: 1px solid #c4c4c4; background: #fff; }
.filter input { flex: 1; min-width: 0; border: 0; padding: 0 4px; background: none; font: 12px "Liberation Sans", Arial, sans-serif; }
.filter input::placeholder { color: #757575; }
.filter button { width: 18px; justify-content: center; border-left: 1px solid #c4c4c4; background: linear-gradient(#fff, #dcdcdc); }
.grid { border: 1px solid #a8a8a8; background: #fff; }
.gridhead { display: flex; height: 23px; align-items: stretch; padding-right: 16px; border-bottom: 1px solid #bdbdbd; background: linear-gradient(#f5f5f5, #e3e3e3); }
.gridhead span { flex: 1; padding: 4px; border-right: 1px solid #bdbdbd; }
.gridbody { display: flex; height: 26px; overflow: hidden; }
.tree { flex: 1; min-width: 0; list-style: none; margin: 0; padding: 0; }
.scrolled { margin-top: -8px; }
.tree li { display: flex; align-items: center; height: 20px; white-space: nowrap; }
.tree .tall { height: 26px; }
.conn { width: 24px; height: 100%; fill: none; stroke: #8c8c60; stroke-dasharray: 1 1; }
.conn .plusbox { stroke-dasharray: none; fill: #fff; }
.conn .plus { stroke: #000; stroke-dasharray: none; }
.ti { width: 15px; height: 15px; margin-right: 4px; }
.sb { width: 15px; height: 26px; margin-right: 1px; }
.version { height: 31px; flex: none; border-top: 3px solid #a8a8a8; text-align: center; font-size: 16px; line-height: 27px; color: #444; background: linear-gradient(#f0f0f0, #dedede 20%, #e8e8e8); }
.splitter { width: 5px; flex: none; display: flex; align-items: center; background: linear-gradient(90deg, #eee, #ddd); }

/* content */
.content { flex: 1; min-width: 0; display: flex; flex-direction: column; }
.apptabs { display: flex; gap: 1px; height: 23px; flex: none; padding-left: 5px; box-shadow: inset 0 -1px #c0c0c0; }
.apptab { display: flex; align-items: center; height: 22px; padding: 0 8px 0 7px; gap: 3px; border: 1px solid #a8a8a8; border-bottom: 0; border-radius: 4px 4px 0 0; background: linear-gradient(#f2f2f2, #dcdcdc 50%, #ededed); color: #a31a24; font-weight: bold; }
.apptab svg { width: 14px; height: 14px; }
.apptab .ax { width: 9px; height: 9px; margin-left: 4px; }
.ok { color: #0a7a1a; font-weight: normal; }
.current { height: 23px; border-color: #7bb6e6; background: #fff; }
.pane { flex: 1; min-height: 0; display: flex; flex-direction: column; padding: 5px 6px 6px 4px; border: solid #c0c0c0; border-width: 0 1px 0 2px; }
.toolbar { display: flex; align-items: center; height: 36px; flex: none; padding: 0 7px 0 6px; border: 1px solid #a8a8a8; background: linear-gradient(#dedede, #f3f3f3); }
.pill { height: 23px; padding: 0 7px; margin: 0 9px 3px 0; border-radius: 5px; background: #fdbb14; box-shadow: 2px 2px #c3b8d8; font: 12px/16px "Open Sans", sans-serif; color: #4a4a5a; }
.stack { margin-left: 14px; }
.sp7 { flex: 7; } .sp6 { flex: 6; }
.plain { gap: 8px; }
.save { margin: 0 14px 0 34px; }
.name { width: 176px; height: 25px; padding: 0 4px; border: 1px solid #c4c4c4; font: 12px "Liberation Sans", Arial, sans-serif; color: #555; }
.pdf { margin-left: 8px; }
.reportwrap { flex: 1; min-height: 0; display: flex; }
.report { flex: 1; overflow: hidden; padding: 0 18.500%; }
.scroll { width: 17px; flex: none; display: flex; flex-direction: column; align-items: center; padding: 8px 2px 6px; background: #f1f1f1; }
.thumb { width: 13px; height: 158px; margin: 5px 0 auto; background: #c1c1c1; }
h1 { margin: 18px 0 39px; text-align: center; font-size: 22px; line-height: 26px; }
h3 { margin: 0; text-align: center; font-size: 20px; line-height: 24px; font-weight: normal; font-style: italic; color: #0a0a66; }
.block { margin-bottom: 58px; }
.block p { margin: 11px 0 10px; font-size: 14px; line-height: 16px; color: #0f6b1a; }
table { width: 100%; table-layout: fixed; border-collapse: collapse; }
h3 + table { margin-top: 12px; }
th { height: 27px; padding: 0; font-size: 14px; background: #c0c0c0; }
td { height: 26px; padding: 0 5px; font-size: 13px; text-align: right; }
td:first-child { text-align: left; }
th, td { border: solid #fff; border-width: 0 1px 1px 0; }
tbody tr:nth-child(odd) td { background: #efefef; }

/* downloads */
.downloads { display: flex; align-items: center; height: 48px; flex: none; background: #f2f2f2; font-size: 12px; }
.dl { width: 227px; flex: 0 1 auto; height: 37px; display: flex; align-items: center; padding: 0 17px 0 16px; border-right: 1px solid #c4c4c4; }
.dl:first-child { padding-left: 20px; width: 231px; }
.di { width: 16px; height: 16px; margin: 0 14px 6px 0; }
.di.png { width: 12px; margin-right: 15px; margin-left: 2px; }
.dl span { flex: 1; white-space: nowrap; padding-top: 3px; }
.du { width: 12px; height: 8px; }
.showall { height: 29px; margin: 0 0 2px auto; padding: 0 15px; background: #fff; border: 1px solid #777; border-radius: 3px; font-size: 12px; }
.dclose { margin: 0 12px; }

/* taskbar */
.taskbar { display: flex; align-items: center; height: 40px; flex: none; background: #000; color: #fff; }
.taskbar button svg { width: 24px; height: 24px; }
.sys { display: flex; gap: 48px; padding: 0 35px 0 16px; }
.apps { display: flex; gap: 1px; }
.apps button { position: relative; width: 48px; height: 40px; justify-content: center; }
.run::after { content: ""; position: absolute; left: 4px; right: 4px; bottom: 0; height: 2px; background: #a5d8f5; }
.front { background: #333; }
.front::after { left: 0; right: 0; }
.two::after { background: linear-gradient(90deg, #a5d8f5 78%, #7a9cb8 78%); }
.tray { display: flex; align-items: center; gap: 14px; margin-left: auto; padding-right: 14px; }
.trayicons { display: flex; align-items: center; gap: 27px; margin-right: 6px; }
.clock { text-align: center; line-height: 18px; }
.note { position: relative; width: 26px; height: 22px; margin-left: 8px; }
.note b { position: absolute; left: 8px; top: 8px; width: 17px; height: 17px; border: 1px solid #999; border-radius: 50%; background: #333; font-size: 11px; line-height: 15px; text-align: center; }
```
